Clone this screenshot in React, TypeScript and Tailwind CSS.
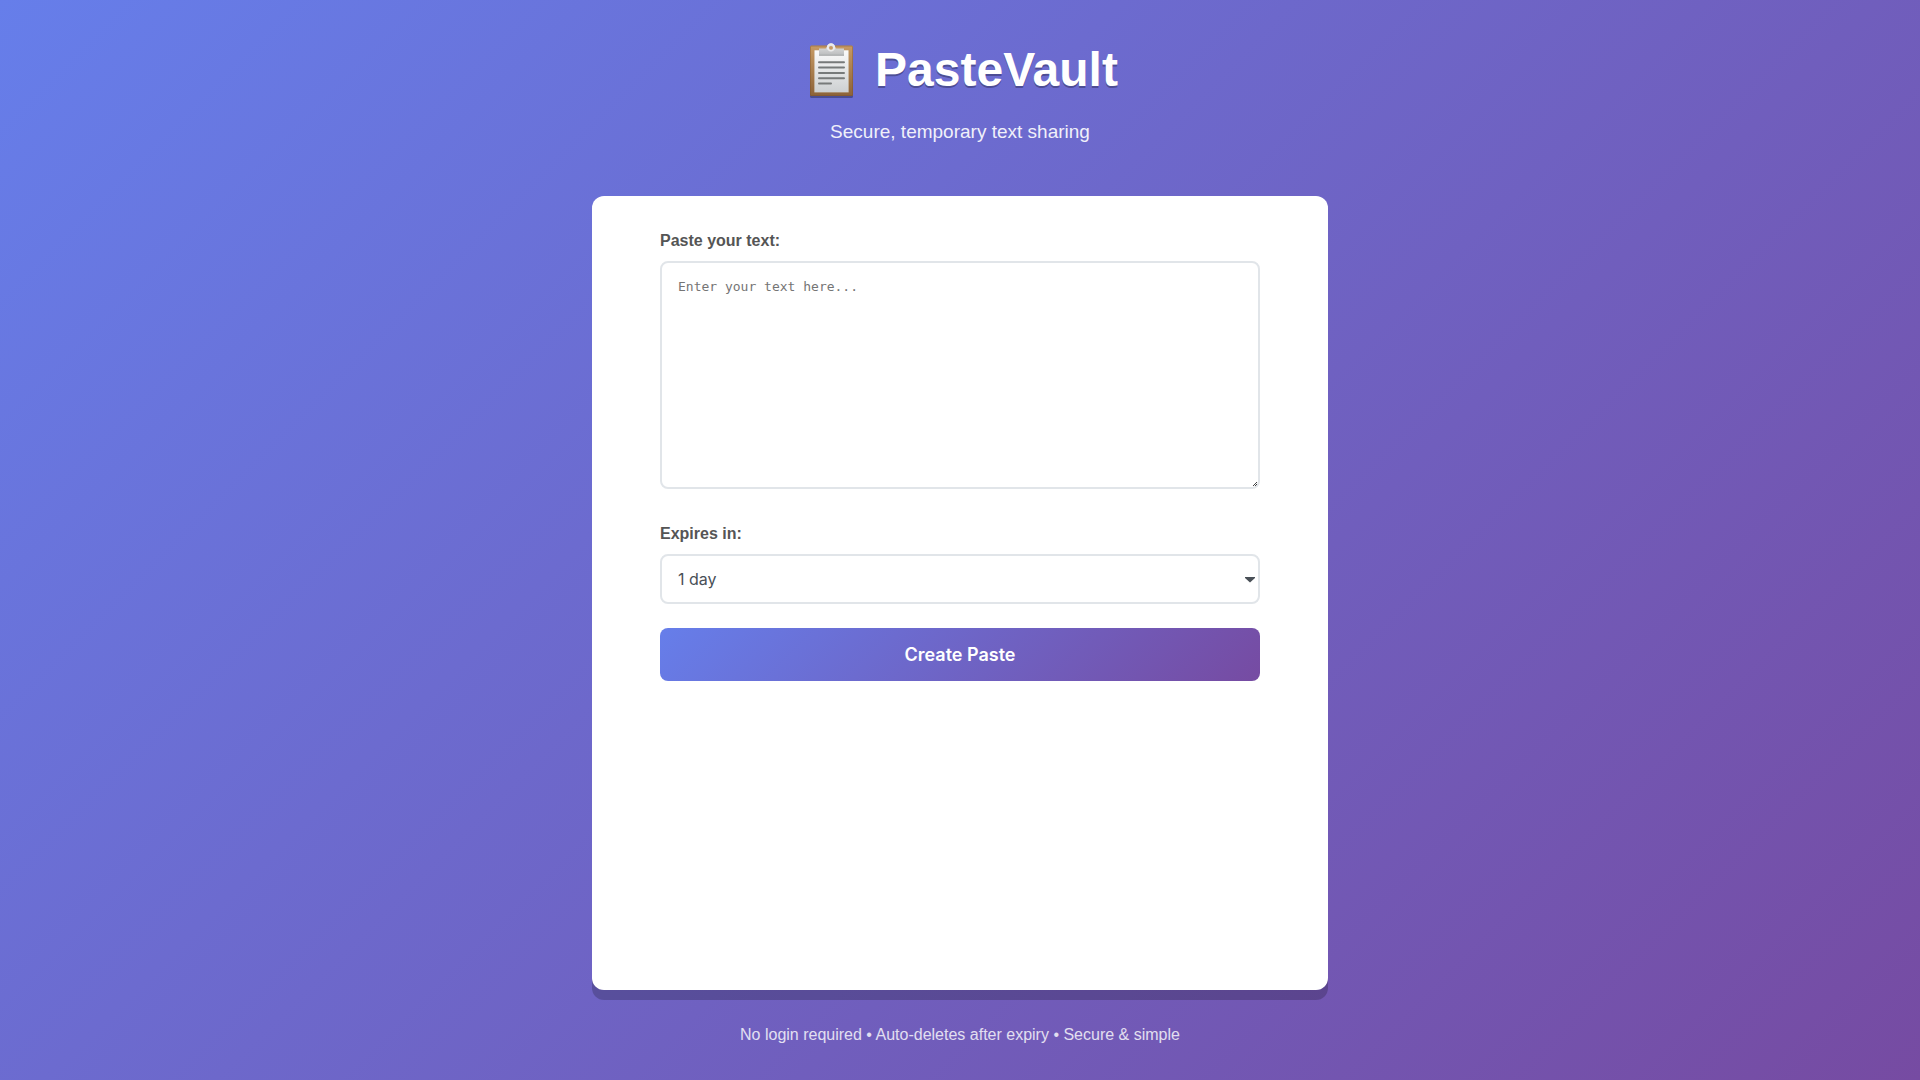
import React, { useState } from "react";

function ClipboardIcon() {
  return (
    <svg viewBox="0 0 60 58" className="h-[58px] w-[60px]" aria-hidden="true">
      <defs>
        <linearGradient id="board" x1="0" y1="0" x2="0" y2="1">
          <stop offset="0" stopColor="#c79a63" />
          <stop offset="1" stopColor="#8c6239" />
        </linearGradient>
        <linearGradient id="paper" x1="0" y1="0" x2="0" y2="1">
          <stop offset="0" stopColor="#fafafa" />
          <stop offset="1" stopColor="#cdd0d2" />
        </linearGradient>
        <linearGradient id="clip" x1="0" y1="0" x2="0" y2="1">
          <stop offset="0" stopColor="#e6e6e6" />
          <stop offset="1" stopColor="#b9bbbc" />
        </linearGradient>
      </defs>
      <rect x="8" y="6.5" width="43" height="50.5" rx="1.5" fill="#000" fillOpacity="0.3" />
      <rect x="8" y="4.5" width="43" height="50.5" rx="1.5" fill="url(#board)" />
      <rect x="8.5" y="5" width="42" height="49.5" rx="1" fill="none" stroke="#7b5128" strokeOpacity="0.4" />
      <rect x="12" y="9" width="35" height="42.5" fill="#b8966d" fillOpacity="0.6" />
      <rect x="12.5" y="9.3" width="34" height="42" fill="url(#paper)" />
      <path d="M17 7.5h6.5c1.5 0 1.5-5 5.5-5s4 5 5.5 5H42v7H17z" fill="url(#clip)" />
      <path d="M17 14.2h25" stroke="#a5a7a8" />
      <circle cx="29" cy="6.4" r="3.2" fill="none" stroke="#ececec" strokeWidth="2" />
      <circle cx="29" cy="6.8" r="1.9" fill="#c99a62" />
      <path
        d="M17 21.3h25M17 26.5h25M17 31.9h25M17 37.3h25M17 42.5h12"
        stroke="#777a7a"
        strokeWidth="2"
        strokeLinecap="round"
      />
    </svg>
  );
}

export default function App() {
  const [text, setText] = useState("");
  const [expiry, setExpiry] = useState("1d");

  return (
    <div className="flex min-h-screen flex-col items-center bg-[linear-gradient(135deg,#667eea_0%,#764ba2_100%)] px-5 pt-9 pb-8 font-['Liberation_Sans',sans-serif] text-[#555]">
      {/* Header */}
      <header className="mb-12 text-center text-white">
        <h1 className="mb-3 flex items-center justify-center gap-[13px] text-5xl leading-[68px] font-bold [text-shadow:0_2px_0_rgba(0,0,0,0.3)]">
          <ClipboardIcon />
          PasteVault
        </h1>
        <p className="text-[19px] leading-8 opacity-90">Secure, temporary text sharing</p>
      </header>

      {/* Paste form */}
      <main className="flex w-full max-w-[736px] grow flex-col items-center rounded-xl bg-white px-5 py-8 shadow-[0_10px_0_rgba(0,0,0,0.2)]">
        <form className="w-full max-w-[600px]" onSubmit={(e) => e.preventDefault()}>
          <label htmlFor="content" className="mb-2 block leading-[25px] font-bold">
            Paste your text:
          </label>
          <div className="relative mb-8">
            <textarea
              id="content"
              value={text}
              onChange={(e) => setText(e.target.value)}
              placeholder="Enter your text here..."
              className="block h-[228px] w-full resize-y rounded-lg border-2 border-[#e1e5e9] p-4 font-['DejaVu_Sans_Mono',monospace] text-[13px] leading-4 placeholder:text-[#757575] [&::-webkit-resizer]:bg-transparent"
            />
            {/* Resize grip */}
            <svg
              viewBox="0 0 4 4"
              className="pointer-events-none absolute right-[3px] bottom-[3px] h-1 w-1"
              aria-hidden="true"
            >
              <path
                d="M0 3h1v1H0zM1 2h1v1H1zM2 1h1v1H2zM3 0h1v1H3zM2 3h1v1H2zM3 2h1v1H3z"
                fill="#444"
                shapeRendering="crispEdges"
              />
            </svg>
          </div>
          <label htmlFor="expiry" className="mb-2 block leading-[25px] font-bold">
            Expires in:
          </label>
          <div className="relative mb-6">
            <select
              id="expiry"
              value={expiry}
              onChange={(e) => setExpiry(e.target.value)}
              className="block h-[50px] w-full appearance-none rounded-lg border-2 border-[#e1e5e9] bg-white px-4 font-[Inter,sans-serif] text-[#495057]"
            >
              <option value="1h">1 hour</option>
              <option value="1d">1 day</option>
              <option value="1w">1 week</option>
            </select>
            <svg
              viewBox="0 0 10 6"
              className="pointer-events-none absolute top-[23px] right-[5px] h-[6px] w-[10px]"
              aria-hidden="true"
            >
              <path d="M0 0h10v1L5 5.6 0 1z" fill="#495057" />
            </svg>
          </div>
          <button
            type="submit"
            className="h-[53px] w-full rounded-lg bg-[linear-gradient(135deg,#667eea_0%,#764ba2_100%)] font-[Inter,sans-serif] text-lg font-semibold text-white"
          >
            Create Paste
          </button>
        </form>
      </main>

      <footer className="mt-8 text-center leading-[26px] text-white opacity-80">
        No login required • Auto-deletes after expiry • Secure &amp; simple
      </footer>
    </div>
  );
}
